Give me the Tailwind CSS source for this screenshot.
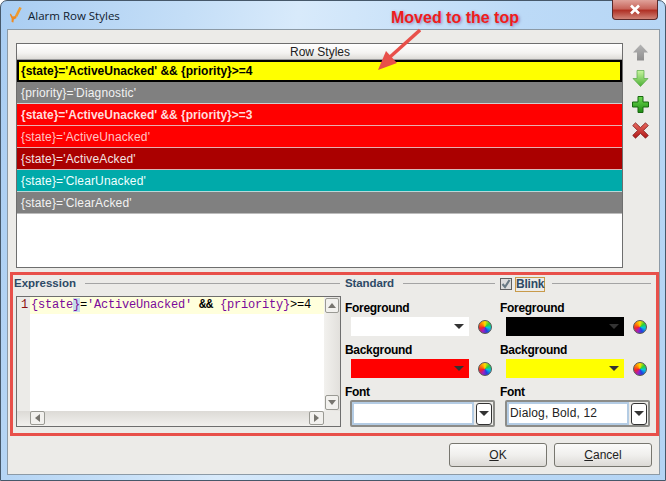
<!DOCTYPE html>
<html lang="en">
<head>
    <meta charset="UTF-8">
    <title>Alarm Row Styles</title>
    <script src="https://cdn.jsdelivr.net/npm/@tailwindcss/browser@4"></script>
</head>
<body class="bg-white font-['Liberation_Sans',sans-serif] text-[12px] text-black overflow-hidden">
    <div class="relative w-[666px] h-[481px] flex flex-col rounded-t-[7px] border border-[#46586a] bg-[linear-gradient(100deg,#a9cdf2_0%,#c4def7_25%,#d8eafb_40%,#bcdaf7_70%,#b4d4f4_100%)]">

        <!-- title bar -->
        <div class="h-[28px] shrink-0 flex items-center pl-[8px] relative">
            <svg width="14" height="16" viewBox="0 0 14 16" class="mr-[5px]">
                <path d="M11.5 .5 L7 9.5" stroke="#f09a2c" stroke-width="2.6" fill="none"/>
                <path d="M1.8 6.5 L3.6 9.5 L6.8 9 L7.6 11 L4.8 12.5 L4.4 15.5 L2.6 15 L2.6 11.5 L.8 7.5 Z" fill="#ee8a22"/>
            </svg>
            <span class="font-['Open_Sans',sans-serif] text-[11.5px] text-[#10202e] pt-px">Alarm Row Styles</span>
            <div class="absolute right-[7px] top-[-1px] w-[46px] h-[20px] rounded-b-[4px] border border-[#5a2a2a] border-t-0 bg-[linear-gradient(180deg,#e0a29a_0%,#c8665c_45%,#b03226_55%,#d08478_100%)] flex items-center justify-center">
                <svg width="12" height="11" viewBox="0 0 12 11"><path d="M2 1.5 L10 9.5 M10 1.5 L2 9.5" stroke="#ffffff" stroke-width="2.6"/></svg>
            </div>
        </div>

        <!-- client area -->
        <div class="ml-[6px] mr-[5px] h-[446px] border border-[#8c9aa6] bg-[#ecebe8] pl-[2px] pt-[13px] flex flex-col">

            <div class="flex pl-[6px]">
                <div class="w-[607px] h-[225px] border border-[#6e6e6e] bg-white flex flex-col">
                    <div class="h-[16px] shrink-0 pl-px text-center leading-[16px] text-[#222] bg-[linear-gradient(180deg,#ffffff,#f4f3f1_60%,#dedcd8)] border-b border-[#9a9a9a]">Row Styles</div>
                    <div class="h-[22px] flex items-center px-[2px] bg-[#ffff00] border-[2px] border-black font-bold">{state}='ActiveUnacked' &amp;&amp; {priority}&gt;=4</div>
                    <div class="h-[22px] flex items-center px-[4px] bg-[#808080] border-b border-[#cfcfcf] text-[#f2f2f2] tracking-[0.15px]">{priority}='Diagnostic'</div>
                    <div class="h-[22px] flex items-center px-[4px] bg-[#ff0000] border-b border-[#e8b0b0] text-[#ffdcdc] font-bold">{state}='ActiveUnacked' &amp;&amp; {priority}&gt;=3</div>
                    <div class="h-[22px] flex items-center px-[4px] bg-[#ff0000] border-b border-[#e8b0b0] text-[#ffc4c4] tracking-[0.15px]">{state}='ActiveUnacked'</div>
                    <div class="h-[22px] flex items-center px-[4px] bg-[#aa0000] border-b border-[#d8b8b8] text-[#f4e4e4] tracking-[0.15px]">{state}='ActiveAcked'</div>
                    <div class="h-[22px] flex items-center px-[4px] bg-[#00aaaa] border-b border-[#b8d8d8] text-[#f0ffff] tracking-[0.15px]">{state}='ClearUnacked'</div>
                    <div class="h-[22px] flex items-center px-[4px] bg-[#808080] border-b border-[#bcbcbc] text-[#f2f2f2] tracking-[0.15px]">{state}='ClearAcked'</div>
                </div>

                <!-- move / add / delete -->
                <div class="w-[34px] flex flex-col items-center pt-[1px] gap-[9px]">
                    <svg width="17" height="17" viewBox="0 0 17 17">
                        <defs><linearGradient id="gUp" x1="0" y1="0" x2="0" y2="1"><stop offset="0" stop-color="#b4b4b4"/><stop offset="1" stop-color="#8e8e8e"/></linearGradient></defs>
                        <path d="M8.5 .5 L16 8.5 H12 V16.5 H5 V8.5 H1 Z" fill="url(#gUp)"/>
                    </svg>
                    <svg width="17" height="17" viewBox="0 0 17 17">
                        <defs><linearGradient id="gDown" x1="0" y1="0" x2="0" y2="1"><stop offset="0" stop-color="#c8f5a0"/><stop offset="1" stop-color="#4cb034"/></linearGradient></defs>
                        <path d="M5 .5 H12 V8.5 H16 L8.5 16.5 L1 8.5 H5 Z" fill="url(#gDown)" stroke="#58a848" stroke-width=".7"/>
                    </svg>
                    <svg width="17" height="17" viewBox="0 0 17 17">
                        <defs><linearGradient id="gPlus" x1="0" y1="0" x2="0" y2="1"><stop offset="0" stop-color="#6fdc50"/><stop offset="1" stop-color="#1e8c14"/></linearGradient></defs>
                        <path d="M6 .5 H11 V6 H16.5 V11 H11 V16.5 H6 V11 H.5 V6 H6 Z" fill="url(#gPlus)" stroke="#17670f"/>
                    </svg>
                    <svg width="17" height="17" viewBox="0 0 17 17">
                        <defs><linearGradient id="gX" x1="0" y1="0" x2="0" y2="1"><stop offset="0" stop-color="#e86a60"/><stop offset="1" stop-color="#b01818"/></linearGradient></defs>
                        <path d="M3.5 .8 L8.5 5.6 L13.5 .8 L16.3 3.6 L11.4 8.5 L16.3 13.4 L13.5 16.2 L8.5 11.4 L3.5 16.2 L.7 13.4 L5.6 8.5 L.7 3.6 Z" fill="url(#gX)" stroke="#7c2020" stroke-width=".8"/>
                    </svg>
                </div>
            </div>

            <!-- highlighted editor section -->
            <div class="mt-[4px] w-[649px] h-[164px] border-[3px] border-[#e8504a] flex">

                <!-- expression -->
                <div class="w-[328px] shrink-0 flex flex-col pl-px pt-[2px]">
                    <div class="h-[14px] flex items-center gap-[9px] pr-px">
                        <span class="font-bold text-[#2e4a66] text-[11.5px]">Expression</span>
                        <span class="flex-1 h-[2px] border-t border-[#a4a4a4] border-b-white"></span>
                    </div>
                    <div class="mt-[5px] ml-[2px] w-[325px] h-[131px] border border-[#6e6e6e] flex flex-col bg-[#ecebe8]">
                        <div class="flex flex-1 min-h-0">
                            <div class="w-[13px] shrink-0 pl-[4px] pt-px font-['Liberation_Mono',monospace] text-[12px] leading-[15px] text-[#8a1010]">1</div>
                            <div class="flex-1 bg-white">
                                <div class="h-[17px] bg-[#ffffdc] pl-px pt-px font-['Liberation_Mono',monospace] text-[12px] tracking-[-0.2px] leading-[15px] whitespace-nowrap text-[#7a0a9a]">{state<span class="bg-[#c4dcec]">}</span><span class="text-black">=</span>'ActiveUnacked' <span class="text-black font-bold">&amp;&amp;</span> {priority}<span class="text-black">&gt;=4</span></div>
                            </div>
                            <div class="w-[16px] shrink-0 flex flex-col justify-between items-center py-px bg-[linear-gradient(90deg,#f2f1ee,#e2e0dc)]">
                                <div class="w-[14px] h-[15px] border border-[#9a9a94] rounded-[2px] bg-[#f2f1ee] flex items-center justify-center"><span class="w-0 h-0 border-x-[4px] border-x-transparent border-b-[5px] border-b-[#77756f]"></span></div>
                                <div class="w-[14px] h-[15px] border border-[#9a9a94] rounded-[2px] bg-[#f2f1ee] flex items-center justify-center"><span class="w-0 h-0 border-x-[4px] border-x-transparent border-t-[5px] border-t-[#77756f]"></span></div>
                            </div>
                        </div>
                        <div class="h-[15px] shrink-0 flex pl-[13px] bg-[linear-gradient(180deg,#dcdad6,#f2f1ee)]">
                            <div class="flex-1 flex justify-between">
                                <div class="w-[15px] h-[14px] border border-[#9a9a94] rounded-[2px] bg-[#f2f1ee] flex items-center justify-center"><span class="w-0 h-0 border-y-[4px] border-y-transparent border-r-[5px] border-r-[#77756f]"></span></div>
                                <div class="w-[15px] h-[14px] border border-[#9a9a94] rounded-[2px] bg-[#f2f1ee] flex items-center justify-center"><span class="w-0 h-0 border-y-[4px] border-y-transparent border-l-[5px] border-l-[#77756f]"></span></div>
                            </div>
                            <div class="w-[16px] bg-[#ecebe8]"></div>
                        </div>
                    </div>
                </div>

                <!-- standard / blink -->
                <div class="flex-1 flex pl-[4px] pt-[2px]">
                    <div class="w-[155px] shrink-0 flex flex-col">
                        <div class="h-[14px] flex items-center gap-[9px] pr-[5px]">
                            <span class="font-bold text-[#2e4a66] text-[11.5px] tracking-[-0.1px]">Standard</span>
                            <span class="flex-1 h-[2px] border-t border-[#a4a4a4]"></span>
                        </div>
                        <div class="mt-[10px] h-[14px] leading-[14px] font-bold tracking-[-0.3px]">Foreground</div>
                        <div class="mt-[2px] flex items-center">
                            <div class="ml-[6px] w-[118px] h-[19px] bg-white flex items-center justify-end pr-[5px]"><span class="w-0 h-0 border-x-[5px] border-x-transparent border-t-[5px] border-t-[#333]"></span></div>
                            <span class="ml-[9px] w-[14px] h-[14px] rounded-full border border-[#555] bg-[conic-gradient(#ffe000,#30d030,#00c8e0,#2040e0,#a020c0,#f02030,#ff8000,#ffe000)]"></span>
                        </div>
                        <div class="mt-[7px] h-[14px] leading-[14px] font-bold tracking-[-0.3px]">Background</div>
                        <div class="mt-[2px] flex items-center">
                            <div class="ml-[6px] w-[118px] h-[19px] bg-[#ff0000] flex items-center justify-end pr-[5px]"><span class="w-0 h-0 border-x-[5px] border-x-transparent border-t-[5px] border-t-[#333]"></span></div>
                            <span class="ml-[9px] w-[14px] h-[14px] rounded-full border border-[#555] bg-[conic-gradient(#ffe000,#30d030,#00c8e0,#2040e0,#a020c0,#f02030,#ff8000,#ffe000)]"></span>
                        </div>
                        <div class="mt-[7px] h-[14px] leading-[14px] font-bold tracking-[-0.3px]">Font</div>
                        <div class="mt-px ml-[5px] w-[145px] h-[27px] border-[2px] border-[#8c8c88] rounded-[2px] flex items-center gap-[2px] pr-px bg-[#ecebe8]">
                            <div class="w-[123px] h-[23px] bg-white border-[2px] border-[#b4cce4]"></div>
                            <div class="w-[16px] h-[22px] rounded-[3px] border border-[#333] bg-white flex items-center justify-center"><span class="w-0 h-0 border-x-[5px] border-x-transparent border-t-[5px] border-t-[#333]"></span></div>
                        </div>
                    </div>

                    <div class="w-[155px] shrink-0 flex flex-col">
                        <div class="h-[14px] flex items-center pr-[4px]">
                            <span class="w-[12px] h-[12px] border border-[#606060] bg-[#dcdcdc] flex items-center justify-center">
                                <svg width="10" height="10" viewBox="0 0 10 10"><path d="M1.5 5 L4 8 L8.5 1" stroke="#6a7a84" stroke-width="2.2" fill="none"/></svg>
                            </span>
                            <span class="ml-[3px] w-[30px] h-[15px] text-center border border-[#c89a4a] leading-[13px] font-bold text-[#2e4a66] tracking-[-0.2px]">Blink</span>
                            <span class="ml-[7px] flex-1 h-[2px] border-t border-[#a4a4a4]"></span>
                        </div>
                        <div class="mt-[10px] h-[14px] leading-[14px] font-bold tracking-[-0.3px]">Foreground</div>
                        <div class="mt-[2px] flex items-center">
                            <div class="ml-[6px] w-[118px] h-[19px] bg-black flex items-center justify-end pr-[5px]"><span class="w-0 h-0 border-x-[5px] border-x-transparent border-t-[5px] border-t-[#333]"></span></div>
                            <span class="ml-[9px] w-[14px] h-[14px] rounded-full border border-[#555] bg-[conic-gradient(#ffe000,#30d030,#00c8e0,#2040e0,#a020c0,#f02030,#ff8000,#ffe000)]"></span>
                        </div>
                        <div class="mt-[7px] h-[14px] leading-[14px] font-bold tracking-[-0.3px]">Background</div>
                        <div class="mt-[2px] flex items-center">
                            <div class="ml-[6px] w-[118px] h-[19px] bg-[#ffff00] flex items-center justify-end pr-[5px]"><span class="w-0 h-0 border-x-[5px] border-x-transparent border-t-[5px] border-t-[#333]"></span></div>
                            <span class="ml-[9px] w-[14px] h-[14px] rounded-full border border-[#555] bg-[conic-gradient(#ffe000,#30d030,#00c8e0,#2040e0,#a020c0,#f02030,#ff8000,#ffe000)]"></span>
                        </div>
                        <div class="mt-[7px] h-[14px] leading-[14px] font-bold tracking-[-0.3px]">Font</div>
                        <div class="mt-px ml-[5px] w-[145px] h-[27px] border-[2px] border-[#8c8c88] rounded-[2px] flex items-center gap-[2px] pr-px bg-[#ecebe8]">
                            <div class="w-[123px] h-[23px] bg-white border-[2px] border-[#b4cce4] pl-px leading-[19px] text-[#222] tracking-[0.15px] whitespace-nowrap">Dialog, Bold, 12</div>
                            <div class="w-[16px] h-[22px] rounded-[3px] border border-[#333] bg-white flex items-center justify-center"><span class="w-0 h-0 border-x-[5px] border-x-transparent border-t-[5px] border-t-[#333]"></span></div>
                        </div>
                    </div>
                </div>
            </div>

            <!-- dialog buttons -->
            <div class="mt-[7px] flex justify-end gap-[7px] pr-[7px]">
                <div class="w-[98px] h-[24px] rounded-[3px] border border-[#77766f] bg-[linear-gradient(180deg,#fbfbfa,#f0efed_50%,#dcdad6)] text-center leading-[22px] text-[#222]"><span class="underline">O</span>K</div>
                <div class="w-[98px] h-[24px] rounded-[3px] border border-[#77766f] bg-[linear-gradient(180deg,#fbfbfa,#f0efed_50%,#dcdad6)] text-center leading-[22px] text-[#222]"><span class="underline">C</span>ancel</div>
            </div>
        </div>

        <!-- screenshot annotation -->
        <span class="absolute left-[390px] top-[7px] font-bold text-[16px] leading-[19px] text-[#f01c1c] whitespace-nowrap [text-shadow:1px_1px_3px_rgba(90,60,130,0.55)]">Moved to the top</span>
        <svg class="absolute left-[370px] top-[26px]" width="50" height="50" viewBox="0 0 50 50">
            <path d="M49 3 L19 30" stroke="#e8504a" stroke-width="3.4" fill="none"/>
            <path d="M7 43 L26 36 L15 24 Z" fill="#e8504a"/>
        </svg>
    </div>
</body>
</html>
